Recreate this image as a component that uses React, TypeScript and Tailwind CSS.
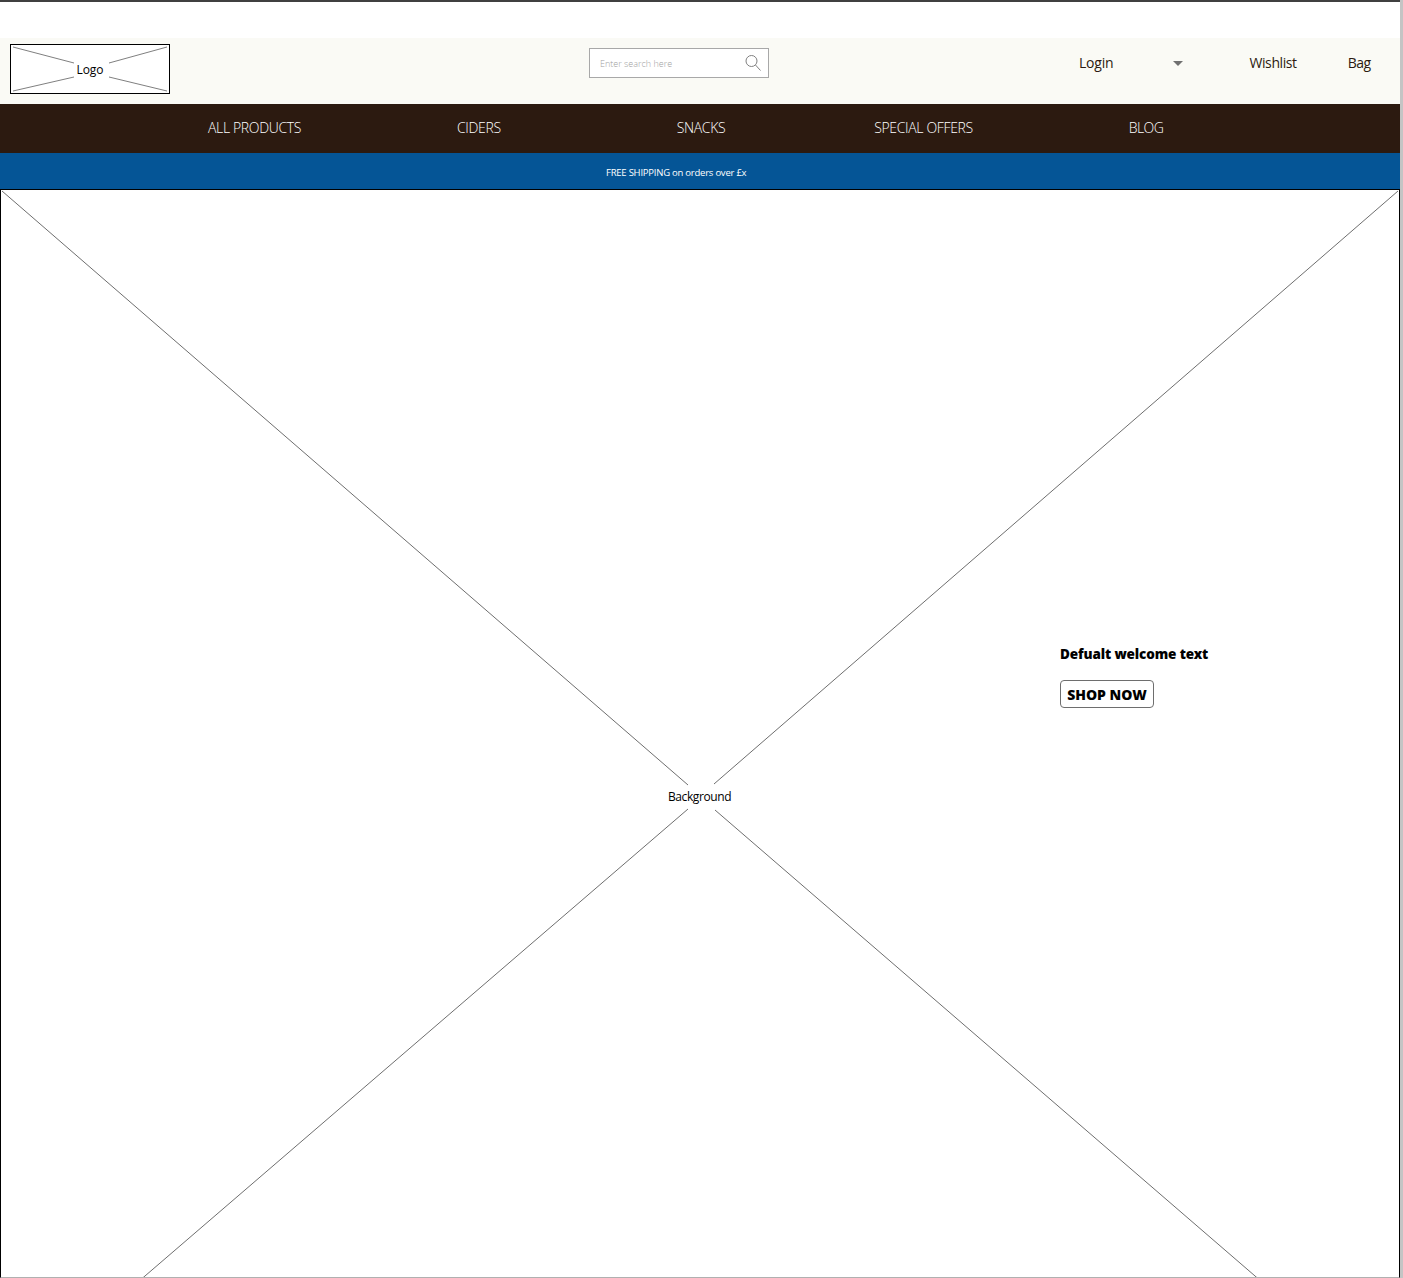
import React from "react";

const sans = "font-['Open_Sans','Noto_Sans',sans-serif]";

function Hero() {
  return (
    <section className="relative min-h-0 flex-1 overflow-hidden border-x border-t border-black bg-white border-b border-b-[#b0b0b0]">
      <svg className="absolute left-0 top-0" width="1398" height="1088" fill="none" stroke="#6e6e6e" strokeWidth="1">
        <path d="M1 1L687 595" />
        <path d="M1397 1L713 594" />
        <path d="M687 619L137 1092" />
        <path d="M714 620L1261 1092" />
      </svg>
      <span className="absolute left-[667px] top-[599px] text-[12px] leading-4 tracking-[-0.4px] text-black">Background</span>
      <div className="absolute left-[1059px] top-[454px] flex flex-col items-start">
        <h1 className="font-['Noto_Sans',sans-serif] text-[13.5px] font-black leading-5 tracking-[-0.12px] text-black">Defualt welcome text</h1>
        <button className="mt-[16px] flex h-[28px] w-[94px] items-center justify-center rounded-[4px] border border-[#6e6e6e] font-['Noto_Sans',sans-serif] text-[14px] font-black text-black">
          SHOP NOW
        </button>
      </div>
    </section>
  );
}

export default function App() {
  return (
    <div className={`flex h-[1278px] w-[1403px] overflow-hidden bg-white ${sans}`}>
      <div className="flex w-[1400px] flex-col">
        <div className="h-[2px] bg-[#404040]" />
        <div className="h-[36px]" />
        <header className="flex h-[66px] items-start bg-[#fafaf5]">
          <div className="relative ml-[10px] mt-[6px] h-[50px] w-[160px] border border-black bg-white">
            <svg className="absolute left-0 top-0" width="158" height="48" fill="none" stroke="#808080">
              <path d="M2 2L63 18" />
              <path d="M156 2L98 18" />
              <path d="M2 46L63 32" />
              <path d="M156 46L98 32" />
            </svg>
            <span className="absolute inset-0 flex items-center justify-center pt-[2px] text-[12px] tracking-[-0.1px] text-black">Logo</span>
          </div>
          <div className="ml-[419px] mt-[10px] flex h-[30px] w-[180px] items-center justify-between border border-[#a8a8a8] bg-white pl-[10px] pr-[6px]">
            <span className="pt-[1px] text-[9px] font-light text-[#a0a0a0]">Enter search here</span>
            <svg width="18" height="18" viewBox="0 0 18 18" fill="none" stroke="#808080" strokeWidth="1">
              <circle cx="7.5" cy="7" r="5.5" />
              <path d="M11.5 11L16.5 16.5" />
            </svg>
          </div>
          <span className="ml-[310px] mt-[15px] text-[14px] leading-5 tracking-[-0.2px] text-[#2c1a10]">Login</span>
          <span className="ml-[60px] mt-[23px] h-0 w-0 border-x-[5px] border-t-[5px] border-x-transparent border-t-[#707070]" />
          <span className="ml-[66px] mt-[15px] text-[14px] leading-5 tracking-[-0.4px] text-[#2c1a10]">Wishlist</span>
          <span className="ml-[51px] mt-[15px] text-[14px] leading-5 tracking-[-0.5px] text-[#2c1a10]">Bag</span>
        </header>
        <nav className="h-[49px] bg-[#2c1a10] pb-[2px] text-[14px] font-light tracking-[-0.35px] text-white">
          <div className="flex h-full items-center pl-[208px]">
            <span>ALL PRODUCTS</span>
            <span className="ml-[156px]">CIDERS</span>
            <span className="ml-[176px]">SNACKS</span>
            <span className="ml-[149px]">SPECIAL OFFERS</span>
            <span className="ml-[156px] tracking-[-0.6px]">BLOG</span>
          </div>
        </nav>
        <div className="flex h-[36px] items-center bg-[#055596] pl-[606px] pt-[4px] text-[9.5px] tracking-[-0.23px] text-white">
          FREE SHIPPING on orders over £x
        </div>
        <Hero />
      </div>
      <div className="w-[3px] bg-[#c4c4c4]" />
    </div>
  );
}
